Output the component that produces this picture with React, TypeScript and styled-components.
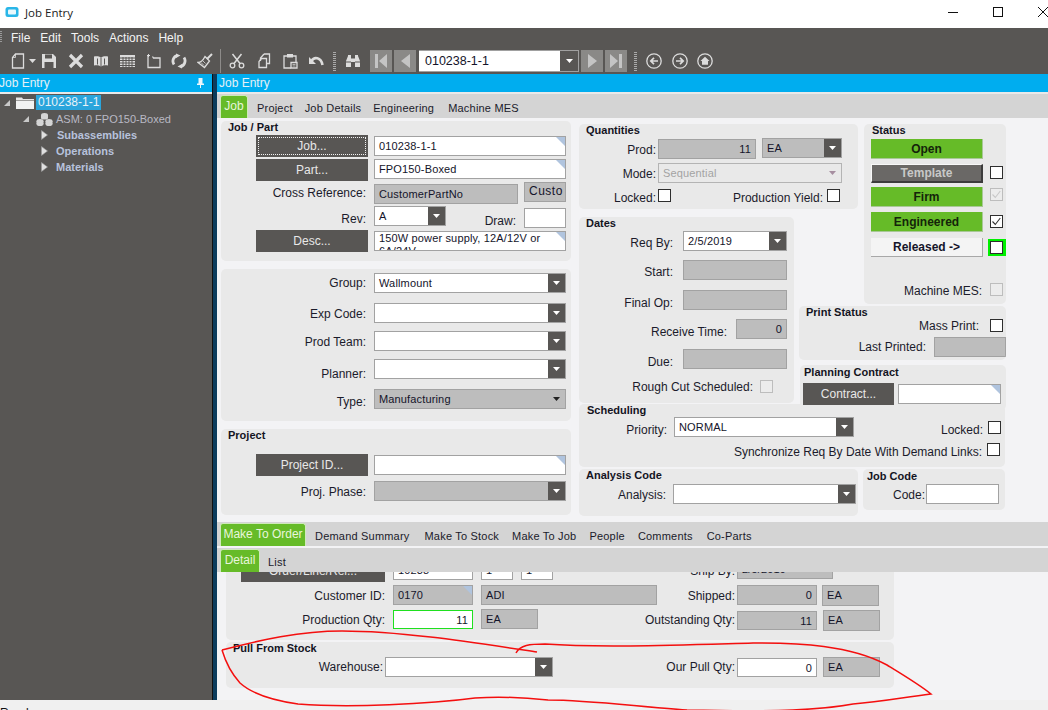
import React from 'react';
import styled, { createGlobalStyle, css } from 'styled-components';

const Global = createGlobalStyle`
  html, body { margin: 0; padding: 0; background: #f0f0f0; }
  * { box-sizing: border-box; }
`;

const Frame = styled.div`
  position: relative;
  width: 1048px;
  height: 710px;
  overflow: hidden;
  display: flex;
  flex-direction: column;
  font-family: "Liberation Sans", Arial, sans-serif;
  font-size: 12px;
  color: #1b1b2b;
`;

/* ---------- window chrome ---------- */
const TitleBar = styled.div`
  height: 28px;
  flex: none;
  background: #fff;
  display: flex;
  align-items: center;
  padding: 0 0 4px 5px;
  font-family: "Open Sans", sans-serif;
  font-size: 11.5px;
  color: #222;
  gap: 6px;
`;
const WindowControls = styled.div`
  margin-left: auto;
  display: flex;
  align-items: center;
  gap: 35px;
`;
const MenuBar = styled.div`
  height: 18px;
  flex: none;
  background: #585654;
  display: flex;
  align-items: center;
  color: #f4f4f4;
  padding: 2px 0 0 11px;
  gap: 10px;
`;
const Toolbar = styled.div`
  height: 28px;
  flex: none;
  background: #585654;
  display: flex;
  align-items: center;
  padding: 2px 0 0 11px;
`;
const ToolIcon = styled.div<{ $ml: number; $w?: number }>`
  margin-left: ${p => p.$ml}px;
  width: ${p => p.$w ?? 16}px;
  height: 16px;
  flex: none;
  display: flex;
  align-items: center;
  justify-content: center;
`;
const ToolCaret = styled(ToolIcon)`
  color: #dcdcdc;
`;
const NavButton = styled.div<{ $ml: number }>`
  margin-left: ${p => p.$ml}px;
  width: 22px;
  height: 22px;
  flex: none;
  background: #8a8987;
  display: flex;
  align-items: center;
  justify-content: center;
`;
const ToolSep = styled.div<{ $ml: number }>`
  margin-left: ${p => p.$ml}px;
  width: 1px;
  height: 24px;
  flex: none;
  background: #8d8b89;
`;
const ToolGrip = styled.div<{ $ml: number }>`
  margin-left: ${p => p.$ml}px;
  width: 3px;
  height: 19px;
  flex: none;
  background: repeating-linear-gradient(to bottom, #aaa 0 1px, transparent 1px 2px);
`;
const ToolCombo = styled.div`
  margin-left: 3px;
  width: 160px;
  height: 22px;
  flex: none;
  display: flex;
  background: #fff;
  border: 1px solid #a0a0a0;
  border-left: none;
  color: #14142a;
  font-size: 12.5px;
  align-items: center;
  padding-left: 6px;
  justify-content: space-between;
`;
const ToolComboArrow = styled.div`
  width: 18px;
  height: 100%;
  background: #585654;
  display: flex;
  align-items: center;
  justify-content: center;
`;

/* ---------- main ---------- */
const Main = styled.div`
  flex: 1;
  display: flex;
  min-height: 0;
`;
const Sidebar = styled.aside`
  width: 212px;
  flex: none;
  background: #585654;
  display: flex;
  flex-direction: column;
  overflow: hidden;
`;
const BlueHeader = styled.div`
  height: 18px;
  flex: none;
  background: #00adef;
  color: #e6f1f6;
  display: flex;
  align-items: center;
  justify-content: space-between;
  padding: 0 8px 0 2px;
`;
const SideHeaderText = styled.span`
  margin-left: -3px;
`;
const LightLine = styled.div`
  height: 2px;
  flex: none;
  background: #e9e9e9;
`;
const TreeRow = styled.div<{ $pl: number; $h: number }>`
  height: ${p => p.$h}px;
  padding-left: ${p => p.$pl}px;
  display: flex;
  align-items: center;
`;
const TreeSelected = styled.span`
  background: #2aa5dc;
  color: #e9f2f8;
  height: 15px;
  line-height: 15px;
  padding: 0 2px;
  margin-left: 2px;
`;
const TreeText = styled.span<{ $bold?: boolean; $ml: number }>`
  margin-left: ${p => p.$ml}px;
  color: ${p => (p.$bold ? '#b7c2dc' : '#b9b9c4')};
  font-size: 11px;
  font-weight: ${p => (p.$bold ? 700 : 400)};
`;
const Splitter = styled.div`
  width: 5px;
  flex: none;
  background: #0c3c5c;
  border-left: 1px solid #111;
`;
const Workspace = styled.section`
  flex: 1;
  min-width: 0;
  display: flex;
  flex-direction: column;
  background: #f3f3f5;
`;
const TabStrip = styled.div<{ $mt?: number }>`
  height: 24px;
  flex: none;
  background: #d4d4d4;
  margin-top: ${p => p.$mt ?? 0}px;
  display: flex;
  align-items: flex-end;
  padding-left: 3px;
`;
const ActiveTab = styled.div<{ $w: number }>`
  width: ${p => p.$w}px;
  height: 23px;
  background: #66bb28;
  color: #e8f6dc;
  border: 1px solid #cfe9bb;
  border-bottom: none;
  border-radius: 3px 3px 0 0;
  text-align: center;
  line-height: 21px;
  white-space: nowrap;
`;
const Tab = styled.div<{ $ml: number }>`
  margin-left: ${p => p.$ml}px;
  line-height: 23px;
  height: 21px;
  font-size: 11px;
  letter-spacing: 0.2px;
  white-space: nowrap;
`;

const Form = styled.div`
  height: 404px;
  flex: none;
  display: flex;
  gap: 8px;
  padding: 3px 0 0 4px;
  overflow: hidden;
`;
const LeftColumn = styled.div`
  width: 350px;
  flex: none;
  display: flex;
  flex-direction: column;
  gap: 8px;
`;
const RightColumn = styled.div`
  width: 427px;
  flex: none;
  margin-top: 3px;
  display: flex;
  flex-direction: column;
`;
const RightGrid = styled.div`
  display: grid;
  grid-template-columns: 215px 5px 59px 6px 142px;
  grid-template-rows: 85px 8px 87px 2px 54px 5px 45px;
`;
const Panel = styled.div<{ $w?: number; $h: number; $area?: string; $ml?: number; $mt?: number; $top?: boolean }>`
  position: relative;
  ${p => p.$w && css`width: ${p.$w}px;`}
  height: ${p => p.$h}px;
  ${p => p.$area && css`grid-area: ${p.$area};`}
  margin-left: ${p => p.$ml ?? 0}px;
  margin-top: ${p => p.$mt ?? 0}px;
  flex: none;
  background: #e9e9e9;
  border-radius: ${p => (p.$top ? '0 0 5px 5px' : '5px')};
  overflow: hidden;
`;
const OverPanel = styled(Panel)`
  z-index: 1;
`;
const PanelTitle = styled.div<{ $pl: number; $h: number; $dy?: number }>`
  height: ${p => p.$h}px;
  padding-left: ${p => p.$pl}px;
  padding-top: ${p => p.$dy ?? 0}px;
  font-weight: 700;
  font-size: 11px;
  line-height: 13px;
  color: #14141f;
`;
const Row = styled.div<{ $mt?: number; $h: number; $gap?: number; $pl?: number; $top?: boolean }>`
  display: flex;
  align-items: ${p => (p.$top ? 'flex-start' : 'center')};
  height: ${p => p.$h}px;
  margin-top: ${p => p.$mt ?? 0}px;
  gap: ${p => p.$gap ?? 0}px;
  padding-left: ${p => p.$pl ?? 0}px;
`;
const Label = styled.div<{ $w: number; $mr?: number; $ml?: number; $dy?: number }>`
  width: ${p => p.$w}px;
  flex: none;
  text-align: right;
  white-space: nowrap;
  margin-right: ${p => p.$mr ?? 0}px;
  margin-left: ${p => p.$ml ?? 0}px;
  margin-top: ${p => (p.$dy ?? 0) * 2}px;
`;
const Spacer = styled.div<{ $w: number }>`
  width: ${p => p.$w}px;
  flex: none;
`;
const ActionButton = styled.div<{ $w: number; $focus?: boolean; $ml?: number }>`
  position: relative;
  width: ${p => p.$w}px;
  height: 22px;
  flex: none;
  margin-left: ${p => p.$ml ?? 0}px;
  background: #585654;
  color: #e8e8e8;
  text-align: center;
  line-height: 23px;
  ${p => p.$focus && css`
    &::after {
      content: '';
      position: absolute;
      inset: 2px;
      border: 1px dotted #f2f2f2;
    }
  `}
`;
const Field = styled.div<{
  $w: number;
  $h?: number;
  $gray?: boolean;
  $right?: boolean;
  $corner?: boolean;
  $focus?: boolean;
  $ml?: number;
  $dy?: number;
  $muted?: boolean;
}>`
  position: relative;
  width: ${p => p.$w}px;
  height: ${p => p.$h ?? 20}px;
  flex: none;
  margin-left: ${p => p.$ml ?? 0}px;
  margin-top: ${p => p.$dy ?? 0}px;
  background: ${p => (p.$gray ? '#bdbdbd' : p.$muted ? '#e9e9e9' : '#fff')};
  border: 1px solid ${p => (p.$focus ? '#1fe01f' : p.$muted ? '#b4b4b4' : '#a2a2a2')};
  color: ${p => (p.$muted ? '#a3a3a3' : '#14142a')};
  padding: 0 4px;
  font-size: 11px;
  letter-spacing: 0.15px;
  line-height: 18px;
  overflow: hidden;
  white-space: nowrap;
  text-align: ${p => (p.$right ? 'right' : 'left')};
  ${p => p.$corner && css`
    &::after {
      content: '';
      position: absolute;
      top: 0;
      right: 0;
      border-style: solid;
      border-width: 0 9px 9px 0;
      border-color: transparent #b0c4de transparent transparent;
    }
  `}
`;
const ComboBox = styled(Field)`
  display: flex;
  padding: 0 0 0 4px;
`;
const ComboText = styled.div`
  flex: 1;
  min-width: 0;
`;
const ComboArrow = styled.div<{ $plain?: boolean; $muted?: boolean }>`
  width: 17px;
  flex: none;
  background: ${p => (p.$plain || p.$muted ? 'transparent' : '#585654')};
  display: flex;
  align-items: center;
  justify-content: center;
  color: ${p => (p.$plain ? '#222' : p.$muted ? '#a68ea0' : '#fff')};
`;
const CheckBox = styled.div<{ $muted?: boolean; $ml?: number; $dy?: number; $focus?: boolean }>`
  width: 13px;
  height: 13px;
  flex: none;
  margin-left: ${p => p.$ml ?? 0}px;
  margin-top: ${p => p.$dy ?? 0}px;
  background: ${p => (p.$muted ? '#ececec' : '#fff')};
  border: 1px solid ${p => (p.$muted ? '#bdbdbd' : '#2e2e2e')};
  display: flex;
  align-items: center;
  justify-content: center;
  ${p => p.$focus && css`box-shadow: 0 0 0 2px #00f000, 2px 0 0 2px #00f000;`}
`;
const StatusButton = styled.div<{ $kind: 'green' | 'gray' | 'plain'; $h?: number }>`
  width: 112px;
  height: ${p => p.$h ?? 20}px;
  flex: none;
  text-align: center;
  font-weight: 700;
  line-height: 21px;
  ${p => p.$kind === 'green' && css`
    background: #66bb28;
    color: #14240a;
    border-bottom: 1px solid #a8c896;
    border-right: 1px solid #a8c896;
  `}
  ${p => p.$kind === 'gray' && css`
    background: #6a6866;
    color: #c8c8c8;
    border: 1px solid #f8f8f8;
    border-right: 2px solid #3c3c3c;
    border-bottom: 2px solid #3c3c3c;
    line-height: 17px;
  `}
  ${p => p.$kind === 'plain' && css`
    background: #f4f4f4;
    color: #14142a;
    border-bottom: 1px solid #a8a8a8;
    border-right: 1px solid #a8a8a8;
    line-height: 19px;
  `}
`;
const CustoBox = styled(Field)`
  height: 20px;
  text-align: center;
  font-size: 12px;
  letter-spacing: 0.5px;
  line-height: 16px;
`;
const DescBox = styled(Field)`
  line-height: 13px;
`;
const Detail = styled.div`
  height: 128px;
  flex: none;
  padding-left: 9px;
  overflow: hidden;
`;
const Clipped = styled.div`
  margin-top: -12px;
`;
const Footer = styled.div`
  height: 10px;
  flex: none;
  background: #f0f0f0;
  line-height: 26px;
  overflow: hidden;
  color: #111;
`;
const Annotation = styled.svg`
  position: absolute;
  left: 0;
  top: 0;
  pointer-events: none;
  z-index: 5;
`;
const MenuGrip = styled.div`
  position: absolute;
  left: 0;
  top: 31px;
  width: 2px;
  height: 12px;
  background: repeating-linear-gradient(to bottom, #9a9a9a 0 1px, transparent 1px 2px);
`;

/* ---------- icons ---------- */
const C = '#dcdcdc';
const Tri = () => (
  <svg width="7" height="4" viewBox="0 0 7 4"><path d="M0 0h7L3.5 4z" fill="currentColor" /></svg>
);
const Svg = ({ children, w = 16, h = 16 }: { children: React.ReactNode; w?: number; h?: number }) => (
  <svg width={w} height={h} viewBox={`0 0 ${w} ${h}`} fill="none" stroke={C} strokeWidth="1.3">{children}</svg>
);
const Check = ({ color }: { color: string }) => (
  <svg width="11" height="11" viewBox="0 0 11 11"><path d="M1.5 5.5l2.8 3 5-6.5" fill="none" stroke={color} strokeWidth="1.1" /></svg>
);
const TreeCollapse = () => (
  <svg width="6" height="6" viewBox="0 0 6 6"><path d="M6 0v6H0z" fill="#c8c8c8" /></svg>
);
const TreeExpand = () => (
  <svg width="7" height="10" viewBox="0 0 7 10"><path d="M0.5 0.5v9L6.5 5z" fill="#e0e0e0" stroke="#9a9a9a" strokeWidth="0.6" /></svg>
);

function App() {
  const combo = (w: number, text = '', dy = 0) => (
    <ComboBox $w={w} $dy={dy}>
      <ComboText>{text}</ComboText>
      <ComboArrow><Tri /></ComboArrow>
    </ComboBox>
  );
  return (
    <Frame>
      <Global />
      <TitleBar>
        <svg width="14" height="12" viewBox="0 0 14 12">
          <rect x="0.5" y="1" width="13" height="10" rx="2.5" fill="#29b6e8" />
          <rect x="3" y="3.5" width="8" height="5" rx="1" fill="#e9f8fd" />
        </svg>
        <span>Job Entry</span>
        <WindowControls>
          <svg width="10" height="10" viewBox="0 0 10 10"><path d="M0 5.5h10" stroke="#111" /></svg>
          <svg width="10" height="10" viewBox="0 0 10 10"><rect x="0.5" y="0.5" width="9" height="9" fill="none" stroke="#111" /></svg>
          <svg width="10" height="10" viewBox="0 0 10 10"><path d="M0 0l10 10M10 0L0 10" stroke="#111" /></svg>
        </WindowControls>
      </TitleBar>
      <MenuGrip />
      <MenuBar>
        <span>File</span><span>Edit</span><span>Tools</span><span>Actions</span><span>Help</span>
      </MenuBar>
      <Toolbar>
        <ToolIcon $ml={0} $w={14}>
          <Svg w={14}><path d="M4.5 1h8v14h-11V4.500z" /><path d="M4.500 1v3.500H1" strokeWidth="0.8" /></Svg>
        </ToolIcon>
        <ToolCaret $ml={4} $w={7}><Tri /></ToolCaret>
        <ToolIcon $ml={5}>
          <Svg><path d="M1 1h11l3 3v11H1z" fill={C} stroke="none" /><rect x="4" y="1.500" width="7" height="4" fill="#585654" stroke="none" /><rect x="3.500" y="9" width="9" height="6" fill="#585654" stroke="none" /></Svg>
        </ToolIcon>
        <ToolIcon $ml={11}>
          <Svg><path d="M2 2l12 12M14 2L2 14" strokeWidth="3.200" /></Svg>
        </ToolIcon>
        <ToolIcon $ml={9}>
          <Svg><path d="M8 4.500C6 3 3 3 1 3.500v9c2-.5 5-.5 7 1 2-1.500 5-1.500 7-1v-9C13 3 10 3 8 4.500z" fill={C} stroke="none" /><path d="M8 4.500v9M4.500 5.500v6M11.500 5.500v6" stroke="#585654" strokeWidth="1" /></Svg>
        </ToolIcon>
        <ToolIcon $ml={10}>
          <Svg><rect x="1" y="2" width="15" height="12" fill={C} stroke="none" /><path d="M1 5h15M1 7.500h15M1 10h15M1 12.500h15M4 4v10M7 4v10M10 4v10M13 4v10" stroke="#585654" strokeWidth="1" /></Svg>
        </ToolIcon>
        <ToolIcon $ml={11}>
          <Svg><path d="M2 2v12.500h12V5H7.500L6.500 3.500" /><path d="M1 2.500h3M2.500 1v3" strokeWidth="1" /></Svg>
        </ToolIcon>
        <ToolIcon $ml={9}>
          <Svg><path d="M3 11.500A6 6 0 0 1 6.500 2.300" strokeWidth="2.800" /><path d="M13 4.500A6 6 0 0 1 9.500 13.700" strokeWidth="2.800" /><path d="M5 .5l4.500 2-4.500 2.500zM11 15.500l-4.500-2 4.500-2.500z" fill={C} stroke="none" /></Svg>
        </ToolIcon>
        <ToolIcon $ml={10}>
          <Svg><path d="M10 6l5-5" strokeWidth="2" /><path d="M8 3.500l4.500 4.500-5 6.500L1 9.500c2.500 0 5-2 7-6z" /><path d="M4 9.500l3 3M6 8l2.500 2.500" strokeWidth="0.8" /></Svg>
        </ToolIcon>
        <ToolSep $ml={7} />
        <ToolIcon $ml={8}>
          <Svg><circle cx="3.500" cy="12.500" r="2.300" /><circle cx="12.500" cy="12.500" r="2.300" /><path d="M5 10.500L12.500 1M11 10.500L3.500 1" strokeWidth="1.500" /></Svg>
        </ToolIcon>
        <ToolIcon $ml={12}>
          <Svg><path d="M7 1h5.500v9.500H9.500M7 1L3.500 5v3" /><path d="M4.500 5.500h5v9h-7.500v-6z" /></Svg>
        </ToolIcon>
        <ToolIcon $ml={9}>
          <Svg><path d="M5 3H2v12h7M11 3h3v6" /><rect x="5" y="1" width="6" height="3.500" fill={C} stroke="none" /><path d="M9 9.500h6V15H9z" /><path d="M10.500 11.500h3M10.500 13h3" strokeWidth="0.7" /></Svg>
        </ToolIcon>
        <ToolIcon $ml={10}>
          <Svg><path d="M3.500 8C6 3.500 13 4 14.500 12" strokeWidth="2.600" /><path d="M1 4v7h7z" fill={C} stroke="none" /></Svg>
        </ToolIcon>
        <ToolGrip $ml={9} />
        <ToolIcon $ml={9}>
          <Svg><path d="M1 14V8l2-5V2h3v12zM15 14V8l-2-5V2h-3v12z" fill={C} stroke="none" /><rect x="6" y="5.500" width="4" height="3.500" fill={C} stroke="none" /><path d="M1 9h5M10 9h5" stroke="#585654" strokeWidth="1" /></Svg>
        </ToolIcon>
        <NavButton $ml={9}>
          <svg width="12" height="14" viewBox="0 0 12 14"><path d="M0 0h3v14H0zM12 0v14L4 7z" fill="#c4c4c4" /></svg>
        </NavButton>
        <NavButton $ml={2}>
          <svg width="9" height="14" viewBox="0 0 9 14"><path d="M9 0v14L0 7z" fill="#c4c4c4" /></svg>
        </NavButton>
        <ToolCombo>
          <span>010238-1-1</span>
          <ToolComboArrow><svg width="7" height="4" viewBox="0 0 7 4"><path d="M0 0h7L3.500 4z" fill="#fff" /></svg></ToolComboArrow>
        </ToolCombo>
        <NavButton $ml={2}>
          <svg width="9" height="14" viewBox="0 0 9 14"><path d="M0 0v14l9-7z" fill="#c4c4c4" /></svg>
        </NavButton>
        <NavButton $ml={2}>
          <svg width="12" height="14" viewBox="0 0 12 14"><path d="M12 0H9v14h3zM0 0v14l8-7z" fill="#c4c4c4" /></svg>
        </NavButton>
        <ToolGrip $ml={7} />
        <ToolIcon $ml={9}>
          <Svg><circle cx="8" cy="8" r="7.200" /><path d="M12 8H5M8 4.800L4.800 8 8 11.200" strokeWidth="1.700" /></Svg>
        </ToolIcon>
        <ToolIcon $ml={10}>
          <Svg><circle cx="8" cy="8" r="7.200" /><path d="M4 8h7M8 4.800L11.200 8 8 11.200" strokeWidth="1.700" /></Svg>
        </ToolIcon>
        <ToolIcon $ml={9}>
          <Svg><circle cx="8" cy="8" r="7.200" /><path d="M3.500 8L8 3.800 12.500 8h-1.500v3.800H5V8z" fill={C} stroke="none" /></Svg>
        </ToolIcon>
      </Toolbar>
      <Main>
        <Sidebar>
          <BlueHeader>
            <SideHeaderText>Job Entry</SideHeaderText>
            <svg width="7" height="10" viewBox="0 0 7 10"><path d="M1.500 0h4v5.500h1.500V7H4v3H3V7H0V5.500h1.500z" fill="#eaf6fc" /></svg>
          </BlueHeader>
          <LightLine />
          <TreeRow $pl={4} $h={17}>
            <TreeCollapse />
            <svg width="18" height="13" viewBox="0 0 18 13" style={{ marginLeft: 6 }}>
              <path d="M0 1.500h6l1 1.500h11v1.500H0z" fill="#e6e6e6" /><rect y="5" width="18" height="8" fill="#f2f2f2" />
            </svg>
            <TreeSelected>010238-1-1</TreeSelected>
          </TreeRow>
          <TreeRow $pl={23} $h={16}>
            <TreeCollapse />
            <svg width="17" height="15" viewBox="0 0 17 15" style={{ marginLeft: 7 }}>
              <g fill="#d4d4d4"><ellipse cx="8.500" cy="3" rx="3.500" ry="2" /><rect x="5" y="3" width="7" height="3" /><ellipse cx="8.500" cy="6" rx="3.500" ry="1.500" /><ellipse cx="4" cy="9" rx="3.500" ry="2" /><rect x=".5" y="9" width="7" height="3" /><ellipse cx="4" cy="12" rx="3.500" ry="2" /><ellipse cx="13" cy="9" rx="3.500" ry="2" /><rect x="9.500" y="9" width="7" height="3" /><ellipse cx="13" cy="12" rx="3.500" ry="2" /></g>
            </svg>
            <TreeText $ml={3}>ASM: 0 FPO150-Boxed</TreeText>
          </TreeRow>
          <TreeRow $pl={41} $h={16}><TreeExpand /><TreeText $bold $ml={9}>Subassemblies</TreeText></TreeRow>
          <TreeRow $pl={41} $h={16}><TreeExpand /><TreeText $bold $ml={8}>Operations</TreeText></TreeRow>
          <TreeRow $pl={41} $h={16}><TreeExpand /><TreeText $bold $ml={8}>Materials</TreeText></TreeRow>
        </Sidebar>
        <Splitter />
        <Workspace>
          <BlueHeader><span>Job Entry</span></BlueHeader>
          <LightLine />
          <TabStrip>
            <ActiveTab $w={28}>Job</ActiveTab>
            <Tab $ml={9}>Project</Tab>
            <Tab $ml={12}>Job Details</Tab>
            <Tab $ml={12}>Engineering</Tab>
            <Tab $ml={14}>Machine MES</Tab>
          </TabStrip>
          <Form>
            <LeftColumn>
              <Panel $h={140}>
                <PanelTitle $pl={7} $h={14}>Job / Part</PanelTitle>
                <Row $h={22}><Spacer $w={35} /><ActionButton $w={112} $focus>Job...</ActionButton><Field $w={192} $ml={6} $corner>010238-1-1</Field></Row>
                <Row $mt={2} $h={22}><Spacer $w={35} /><ActionButton $w={112}>Part...</ActionButton><Field $w={192} $ml={6} $dy={-3} $corner>FPO150-Boxed</Field></Row>
                <Row $mt={1} $h={22}><Label $w={145} $mr={8}>Cross Reference:</Label><Field $w={144} $gray $dy={2}>CustomerPartNo</Field><CustoBox $w={42} $ml={6} $gray $dy={-2}>Custo</CustoBox></Row>
                <Row $mt={2} $h={22}><Label $w={145} $mr={8} $dy={2}>Rev:</Label>{combo(72, 'A', -2)}<Label $w={70} $dy={4}>Draw:</Label><Field $w={42} $ml={8} $dy={2} /></Row>
                <Row $mt={2} $h={22}><Spacer $w={35} /><ActionButton $w={112}>Desc...</ActionButton><DescBox $w={192} $ml={6} $corner>150W power supply, 12A/12V or<br />6A/24V</DescBox></Row>
              </Panel>
              <Panel $h={152}>
                <Row $mt={4} $h={20}><Label $w={145} $mr={8}>Group:</Label>{combo(192, 'Wallmount')}</Row>
                <Row $mt={10} $h={20}><Label $w={145} $mr={8} $dy={1}>Exp Code:</Label>{combo(192)}</Row>
                <Row $mt={8} $h={20}><Label $w={145} $mr={8} $dy={1}>Prod Team:</Label>{combo(192)}</Row>
                <Row $mt={8} $h={20}><Label $w={145} $mr={8} $dy={5}>Planner:</Label>{combo(192)}</Row>
                <Row $mt={10} $h={20}>
                  <Label $w={145} $mr={8} $dy={3}>Type:</Label>
                  <ComboBox $w={192} $gray><ComboText>Manufacturing</ComboText><ComboArrow $plain><Tri /></ComboArrow></ComboBox>
                </Row>
              </Panel>
              <Panel $h={86}>
                <PanelTitle $pl={7} $h={25}>Project</PanelTitle>
                <Row $h={22}><Spacer $w={35} /><ActionButton $w={112}>Project ID...</ActionButton><Field $w={192} $ml={6} $corner /></Row>
                <Row $mt={5} $h={20}>
                  <Label $w={145} $mr={8} $dy={1}>Proj. Phase:</Label>
                  <ComboBox $w={192} $gray><ComboText /><ComboArrow><Tri /></ComboArrow></ComboBox>
                </Row>
              </Panel>
            </LeftColumn>
            <RightColumn>
              <RightGrid>
                <Panel $h={85} $area="1 / 1 / 2 / 4">
                  <PanelTitle $pl={7} $h={15}>Quantities</PanelTitle>
                  <Row $h={20}>
                    <Label $w={77} $mr={2} $dy={1}>Prod:</Label><Field $w={98} $gray $right>11</Field>
                    <ComboBox $w={80} $ml={6} $dy={-2} $gray><ComboText>EA</ComboText><ComboArrow><Tri /></ComboArrow></ComboBox>
                  </Row>
                  <Row $mt={4} $h={20}>
                    <Label $w={77} $mr={2} $dy={1}>Mode:</Label>
                    <ComboBox $w={184} $muted><ComboText>Sequential</ComboText><ComboArrow $muted><Tri /></ComboArrow></ComboBox>
                  </Row>
                  <Row $mt={5} $h={17}>
                    <Label $w={77} $mr={2} $dy={1}>Locked:</Label><CheckBox $dy={-2} />
                    <Label $w={152} $dy={1}>Production Yield:</Label><CheckBox $ml={4} $dy={-2} />
                  </Row>
                </Panel>
                <Panel $h={186} $area="3 / 1 / 8 / 2">
                  <PanelTitle $pl={7} $h={14}>Dates</PanelTitle>
                  <Row $h={20}><Label $w={94} $mr={10} $dy={2}>Req By:</Label>
                    <ComboBox $w={104}><ComboText>2/5/2019</ComboText><ComboArrow><Tri /></ComboArrow></ComboBox>
                  </Row>
                  <Row $mt={9} $h={20}><Label $w={94} $mr={10} $dy={2}>Start:</Label><Field $w={104} $gray /></Row>
                  <Row $mt={10} $h={20}><Label $w={94} $mr={10} $dy={3}>Final Op:</Label><Field $w={104} $gray /></Row>
                  <Row $mt={9} $h={20}><Label $w={148} $mr={9} $dy={3}>Receive Time:</Label><Field $w={51} $gray $right>0</Field></Row>
                  <Row $mt={10} $h={20}><Label $w={94} $mr={10} $dy={3}>Due:</Label><Field $w={104} $gray /></Row>
                  <Row $mt={9} $h={17}><Label $w={174} $mr={7}>Rough Cut Scheduled:</Label><CheckBox $muted /></Row>
                </Panel>
                <Panel $h={180} $area="1 / 5 / 4 / 6">
                  <PanelTitle $pl={8} $h={15}>Status</PanelTitle>
                  <Row $h={20} $pl={7}><StatusButton $kind="green">Open</StatusButton></Row>
                  <Row $mt={5} $h={19} $pl={7}><StatusButton $kind="gray" $h={19}>Template</StatusButton><CheckBox $ml={7} $dy={-2} /></Row>
                  <Row $mt={4} $h={20} $pl={7}><StatusButton $kind="green">Firm</StatusButton><CheckBox $ml={7} $muted $dy={-6}><Check color="#c8c8c8" /></CheckBox></Row>
                  <Row $mt={5} $h={20} $pl={7}><StatusButton $kind="green">Engineered</StatusButton><CheckBox $ml={7} $dy={-1}><Check color="#333" /></CheckBox></Row>
                  <Row $mt={6} $h={19} $pl={7}><StatusButton $kind="plain" $h={19}>Released -&gt;</StatusButton><CheckBox $ml={7} $focus /></Row>
                  <Row $mt={25} $h={15}><Label $w={118} $mr={8} $dy={1}>Machine MES:</Label><CheckBox $muted /></Row>
                </Panel>
                <Panel $h={54} $area="5 / 3 / 6 / 6">
                  <PanelTitle $pl={7} $h={13}>Print Status</PanelTitle>
                  <Row $h={13}><Label $w={180} $mr={11}>Mass Print:</Label><CheckBox /></Row>
                  <Row $mt={5} $h={20}><Label $w={127} $mr={8}>Last Printed:</Label><Field $w={72} $gray /></Row>
                </Panel>
                <OverPanel $h={45} $ml={1} $area="7 / 3 / 8 / 6">
                  <PanelTitle $pl={4} $h={18} $dy={1}>Planning Contract</PanelTitle>
                  <Row $h={22} $pl={3}><ActionButton $w={91}>Contract...</ActionButton><Field $w={103} $h={20} $ml={4} $corner /></Row>
                </OverPanel>
              </RightGrid>
              <Panel $h={63} $mt={-6} $w={426}>
                <PanelTitle $pl={8} $h={13}>Scheduling</PanelTitle>
                <Row $h={20}>
                  <Label $w={88} $mr={7} $dy={3}>Priority:</Label>
                  <ComboBox $w={180}><ComboText>NORMAL</ComboText><ComboArrow><Tri /></ComboArrow></ComboBox>
                  <Label $w={129} $dy={3}>Locked:</Label><CheckBox $ml={5} />
                </Row>
                <Row $mt={6} $h={13}><Label $w={403} $dy={2}>Synchronize Req By Date With Demand Links:</Label><CheckBox $ml={5} /></Row>
              </Panel>
              <Row $mt={2} $h={47} $gap={5} $top>
                <Panel $h={47} $w={279}>
                  <PanelTitle $pl={7} $h={15}>Analysis Code</PanelTitle>
                  <Row $h={20}><Label $w={87} $mr={7} $dy={1}>Analysis:</Label>{combo(183)}</Row>
                </Panel>
                <Panel $h={41} $w={142}>
                  <PanelTitle $pl={4} $h={15} $dy={1}>Job Code</PanelTitle>
                  <Row $h={20}><Label $w={62} $mr={1} $dy={1}>Code:</Label><Field $w={73} /></Row>
                </Panel>
              </Row>
            </RightColumn>
          </Form>
          <TabStrip>
            <ActiveTab $w={86}>Make To Order</ActiveTab>
            <Tab $ml={9}>Demand Summary</Tab>
            <Tab $ml={15}>Make To Stock</Tab>
            <Tab $ml={13}>Make To Job</Tab>
            <Tab $ml={13}>People</Tab>
            <Tab $ml={13}>Comments</Tab>
            <Tab $ml={14}>Co-Parts</Tab>
          </TabStrip>
          <TabStrip $mt={2}>
            <ActiveTab $w={40}>Detail</ActiveTab>
            <Tab $ml={8}>List</Tab>
          </TabStrip>
          <Detail>
            <Panel $h={68} $w={668} $top>
              <Clipped>
                <Row $h={22}>
                  <Spacer $w={15} /><ActionButton $w={144}>Order/Line/Rel...</ActionButton>
                  <Field $w={80} $ml={8} $dy={-3}>10238</Field>
                  <Field $w={32} $ml={8} $dy={-3}>1</Field>
                  <Field $w={32} $ml={8} $dy={-3}>1</Field>
                  <Label $w={182}>Ship By:</Label>
                  <Field $w={96} $ml={2} $dy={-4} $gray>2/5/2019</Field>
                </Row>
                <Row $mt={3} $h={20}>
                  <Label $w={159} $mr={8} $dy={1}>Customer ID:</Label><Field $w={80} $gray $corner>0170</Field>
                  <Field $w={176} $ml={8} $gray>ADI</Field>
                  <Label $w={78} $mr={2} $dy={1}>Shipped:</Label><Field $w={80} $gray $right>0</Field>
                  <Field $w={57} $h={21} $ml={5} $dy={1} $gray>EA</Field>
                </Row>
                <Row $mt={4} $h={20}>
                  <Label $w={159} $mr={8} $dy={1}>Production Qty:</Label><Field $w={80} $h={19} $right $focus>11</Field>
                  <Field $w={57} $ml={8} $gray>EA</Field>
                  <Spacer $w={97} />
                  <Label $w={100} $mr={2} $dy={1}>Outstanding Qty:</Label><Field $w={80} $dy={3} $h={19} $gray $right>11</Field>
                  <Field $w={57} $h={21} $ml={6} $dy={3} $gray>EA</Field>
                </Row>
              </Clipped>
            </Panel>
            <Panel $h={46} $w={668} $mt={2}>
              <PanelTitle $pl={7} $h={15}>Pull From Stock</PanelTitle>
              <Row $h={20}>
                <Label $w={157} $mr={2}>Warehouse:</Label>{combo(168)}
                <Label $w={182} $mr={2}>Our Pull Qty:</Label><Field $w={80} $h={19} $right>0</Field>
                <Field $w={57} $ml={6} $gray>EA</Field>
              </Row>
            </Panel>
          </Detail>
        </Workspace>
      </Main>
      <Footer>Ready</Footer>
      <Annotation width="1048" height="710" viewBox="0 0 1048 710" fill="none" stroke="#f40f0f" strokeWidth="1.500">
        <path d="M222 650C260 640 300 631 342 631C400 631 470 642 537 652" />
        <path d="M516 653C520 645 530 644 545 644C600 648 680 645 753 643C800 643 850 645 887 665C905 676 920 685 931 694C900 698 880 702 853 704C820 710 780 712 687 710C640 707 590 700 548 700C510 696 490 697 475 698C430 704 350 708 298 704C270 700 250 692 240 683C230 672 225 660 222 650" />
      </Annotation>
    </Frame>
  );
}

export default App;
